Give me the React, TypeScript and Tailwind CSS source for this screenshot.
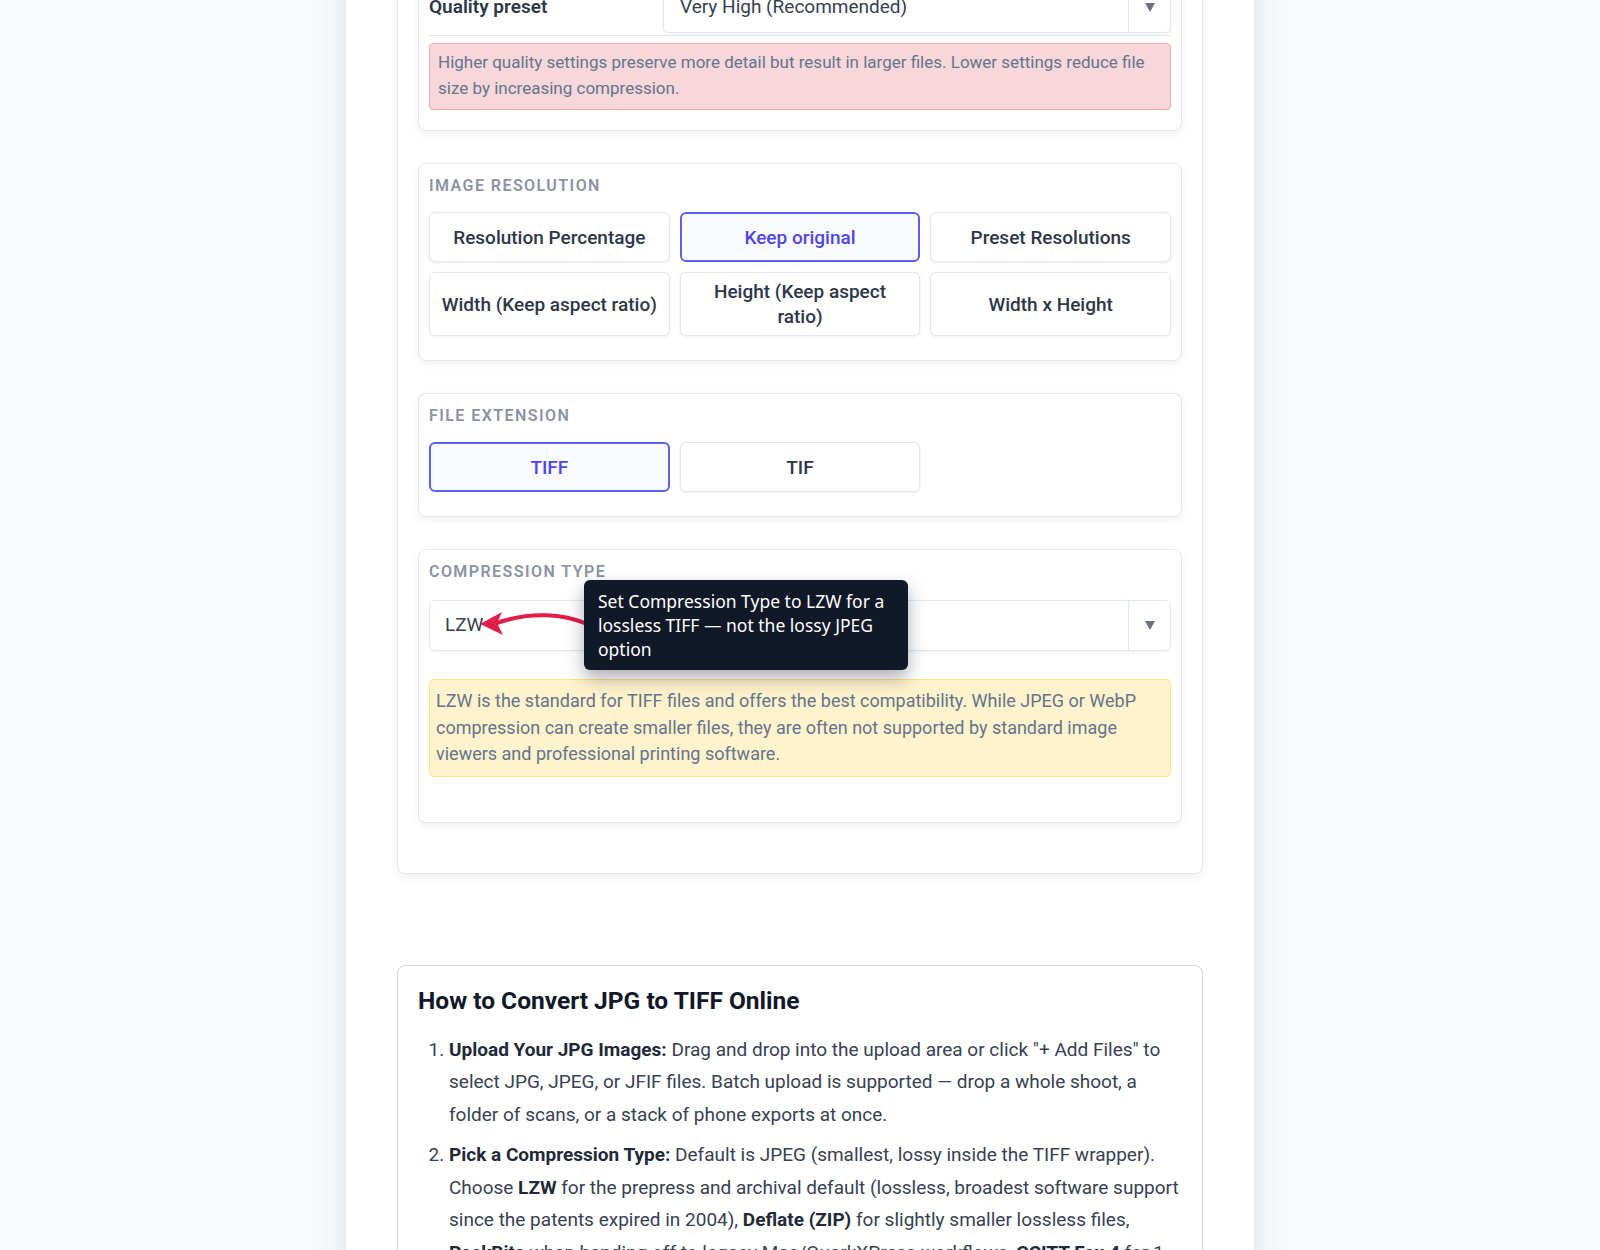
import React from "react";
import clsx from "clsx";

function Caret() {
  return (
    <span className="block h-0 w-0 border-x-[5px] border-t-[9px] border-x-transparent border-t-[#6b7280]" />
  );
}

function SelectBox({
  value,
  textPad,
}: {
  value: string;
  textPad: string;
}) {
  return (
    <div className="flex h-[51px] items-stretch rounded-md border border-slate-200 bg-white shadow-[0_1px_3px_rgba(15,23,42,0.06)]">
      <div className={clsx("flex flex-1 items-center text-[19px] text-[#374151]", textPad)}>
        {value}
      </div>
      <div className="flex w-[42px] items-center justify-center border-l border-slate-200">
        <Caret />
      </div>
    </div>
  );
}

function Option({ label, active }: { label: string; active?: boolean }) {
  return (
    <div
      className={clsx(
        "flex min-h-[50px] items-center justify-center rounded-md px-[10px] py-1.5 text-center text-[19px] font-medium leading-[25px]",
        active
          ? "border-2 border-[#5b5ff2] bg-[#f8fafc] text-[#5046e5]"
          : "border border-slate-200 bg-white text-[#2d3748] shadow-[0_1px_3px_rgba(15,23,42,0.08)]"
      )}
    >
      {label}
    </div>
  );
}

function Section({
  title,
  children,
  className,
}: {
  title?: string;
  children: React.ReactNode;
  className?: string;
}) {
  return (
    <section
      className={clsx(
        "rounded-lg border border-slate-200 bg-white px-[10px] shadow-[0_3px_8px_rgba(15,23,42,0.06)]",
        title ? "pt-[11px]" : "pt-[10px]",
        className
      )}
    >
      {title && (
        <h3 className="h-[22px] text-[16px] font-semibold uppercase leading-[22px] tracking-[0.09em] text-[#8a93a3]">
          {title}
        </h3>
      )}
      {children}
    </section>
  );
}

function CompressionHint() {
  return (
    <>
      <div className="absolute left-[155px] top-[-20px] z-20 w-[324px] rounded-md bg-[#111827] px-[14px] py-[9px] font-['Noto_Sans',sans-serif] text-[17.5px] leading-[24px] text-white shadow-[0_8px_18px_rgba(15,23,42,0.35)]">
        Set Compression Type to LZW for a lossless TIFF — not the lossy JPEG option
      </div>
      <svg
        className="absolute left-[40px] top-0 z-10"
        width="130"
        height="50"
        viewBox="0 0 130 50"
        fill="none"
      >
        <path
          d="M118 24 C 95 14, 62 11, 28 23"
          stroke="#e11d48"
          strokeWidth="4"
          strokeLinecap="round"
        />
        <path d="M11 24 L33 12 L28 23 L34 35 Z" fill="#e11d48" />
      </svg>
    </>
  );
}

export default function App() {
  return (
    <div className="h-screen overflow-hidden bg-[#f8fafc] font-[Roboto,'Noto_Sans',sans-serif]">
      <main className="mx-auto min-h-full w-[908px] bg-white px-[51px] shadow-[0_0_34px_rgba(15,23,42,0.11)]">
        {/* converter settings */}
        <div className="mt-[-50px] rounded-lg border border-slate-200 bg-white px-5 pb-[50px] pt-5 shadow-[0_4px_10px_rgba(15,23,42,0.06)]">
          <Section className="pb-[20px]">
            <div className="flex items-center justify-between border-b border-slate-200 pb-[2px]">
              <span className="text-[19px] font-semibold text-[#2d3748]">Quality preset</span>
              <div className="w-[508px]">
                <SelectBox value="Very High (Recommended)" textPad="pl-[16px]" />
              </div>
            </div>
            <div className="mt-[7px] rounded-[4px] border border-[#f1a9b1] bg-[#f8d7da] px-[8px] pb-[8px] pt-[5px] text-[17px] leading-[26px] text-[#64748b]">
              Higher quality settings preserve more detail but result in larger files. Lower settings
              reduce file size by increasing compression.
            </div>
          </Section>

          <Section title="Image Resolution" className="mt-8 pb-[24px]">
            <div className="mt-[15px] grid grid-cols-3 gap-[10px]">
              <Option label="Resolution Percentage" />
              <Option label="Keep original" active />
              <Option label="Preset Resolutions" />
              <Option label="Width (Keep aspect ratio)" />
              <Option label="Height (Keep aspect ratio)" />
              <Option label="Width x Height" />
            </div>
          </Section>

          <Section title="File Extension" className="mt-8 pb-[24px]">
            <div className="mt-[15px] grid grid-cols-3 gap-[10px]">
              <Option label="TIFF" active />
              <Option label="TIF" />
            </div>
          </Section>

          <Section title="Compression Type" className="mt-8 pb-[45px]">
            <div className="relative mt-[17px]">
              <SelectBox value="LZW" textPad="pl-[15px]" />
              <CompressionHint />
            </div>
            <div className="mt-[28px] rounded-[4px] border border-[#fde38f] bg-[#fff3cd] px-[6px] pb-[8px] pt-[8px] text-[18px] leading-[26.5px] text-[#64748b]">
              LZW is the standard for TIFF files and offers the best compatibility. While JPEG or WebP
              compression can create smaller files, they are often not supported by standard image
              viewers and professional printing software.
            </div>
          </Section>
        </div>

        {/* how-to guide */}
        <article className="mt-[91px] rounded-lg border border-[#d4d7dd] bg-white px-5 pb-6 pt-5">
          <h2 className="text-[24.5px] font-bold leading-[30px] text-[#111827]">
            How to Convert JPG to TIFF Online
          </h2>
          <ol className="mt-[18px] list-decimal pl-[31px] text-[19px] leading-[32.6px] text-[#374151]">
            <li className="mb-2">
              <strong className="font-bold text-[#1f2937]">Upload Your JPG Images:</strong> Drag and
              drop into the upload area or click "+ Add Files" to select JPG, JPEG, or JFIF files.
              Batch upload is supported — drop a whole shoot, a folder of scans, or a stack of phone
              exports at once.
            </li>
            <li className="mb-2">
              <strong className="font-bold text-[#1f2937]">Pick a Compression Type:</strong> Default
              is JPEG (smallest, lossy inside the TIFF wrapper). Choose{" "}
              <strong className="font-bold text-[#1f2937]">LZW</strong> for the prepress and
              archival default (lossless, broadest software support since the patents expired in
              2004), <strong className="font-bold text-[#1f2937]">Deflate (ZIP)</strong> for
              slightly smaller lossless files,{" "}
              <strong className="font-bold text-[#1f2937]">PackBits</strong> when handing off to
              legacy Mac/QuarkXPress workflows,{" "}
              <strong className="font-bold text-[#1f2937]">CCITT Fax 4</strong> for 1-bit
              black-and-white scans, or <strong className="font-bold text-[#1f2937]">None</strong>{" "}
              for fully uncompressed output.
            </li>
          </ol>
        </article>
      </main>
    </div>
  );
}
